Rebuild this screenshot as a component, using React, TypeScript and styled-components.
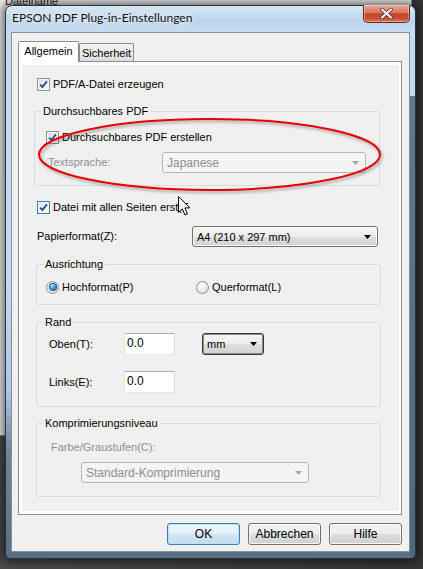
import React from "react";
import styled, { createGlobalStyle } from "styled-components";

const GlobalStyle = createGlobalStyle`
  html, body {
    margin: 0;
    padding: 0;
    background: #3b3b3b;
  }
  body {
    font-family: "Liberation Sans", Arial, sans-serif;
    font-size: 11px;
    color: #000;
  }
`;

const Desktop = styled.div`
  position: relative;
  width: 423px;
  height: 569px;
  overflow: hidden;
  background: linear-gradient(to right, #4a4a4a 0%, #3d3d3d 60%, #353535 100%);
`;

// window lying behind the dialog, only its edges are visible
const BackWindow = styled.div`
  position: absolute;
  left: -30px;
  top: -6px;
  width: 440px;
  height: 440px;
  background: #ececec;
  border: 1px solid #8a8a8a;
`;

const BackHeader = styled.div`
  padding-left: 34px;
  line-height: 12px;
  font-size: 11px;
  color: #222;
`;

const Window = styled.div`
  position: absolute;
  left: 5px;
  top: 5px;
  width: 411px;
  box-sizing: border-box;
  border: 1px solid #26323e;
  border-radius: 7px 7px 5px 5px;
  padding: 0 5px 6px;
  background:
    linear-gradient(#63778c, #52657a) right 0 top 90px / 5px calc(100% - 90px) no-repeat,
    linear-gradient(
      to bottom,
      #d9e8f6 0px,
      #bcd4ec 14px,
      #c6dbf0 26px,
      #c3d9ef 50%,
      #aec8e2 70%,
      #71869b 80%,
      #5a6e83 100%
    );
  box-shadow: 0 0 10px 3px rgba(0, 0, 0, 0.55);
`;

const TitleBar = styled.div`
  height: 26px;
  display: flex;
  align-items: flex-start;
  justify-content: space-between;
`;

const Title = styled.div`
  padding: 4px 0 0 1px;
  font-family: Lato, "Noto Sans", sans-serif;
  font-size: 12px;
  line-height: 16px;
  color: #111;
  text-shadow: 0 0 6px rgba(255, 255, 255, 0.95), 0 0 10px rgba(255, 255, 255, 0.8);
`;

const CloseButton = styled.div`
  width: 47px;
  height: 18px;
  margin-top: -1px;
  box-sizing: border-box;
  border: 1px solid #5b2b22;
  border-top: none;
  border-radius: 0 0 5px 5px;
  background: linear-gradient(
    #e9a896 0%,
    #d9765f 45%,
    #c3442b 52%,
    #c94f36 80%,
    #e07859 100%
  );
  box-shadow: inset 0 0 0 1px rgba(255, 255, 255, 0.35);
  display: flex;
  align-items: center;
  justify-content: center;
`;

const Client = styled.div`
  border: 1px solid #7d91a5;
  background: #f0f0f0;
  padding: 8px 7px 6px 6px;
`;

const TabStrip = styled.div`
  display: flex;
  align-items: flex-end;
  height: 21px;
  margin-bottom: -1px;
  position: relative;
  z-index: 1;
`;

const Tab = styled.div<{ $active?: boolean; $w: number }>`
  box-sizing: border-box;
  width: ${(p) => p.$w}px;
  height: ${(p) => (p.$active ? 21 : 18)}px;
  margin-bottom: ${(p) => (p.$active ? 0 : 1)}px;
  border: 1px solid #898c95;
  border-bottom: none;
  border-radius: 2px 2px 0 0;
  background: ${(p) =>
    p.$active ? "#fff" : "linear-gradient(#f4f4f4 0%, #e9e9e9 50%, #dcdcdc 100%)"};
  display: flex;
  align-items: center;
  justify-content: center;
  padding-bottom: ${(p) => (p.$active ? 2 : 0)}px;
  font-size: 11px;
`;

const TabPanel = styled.div`
  border: 1px solid #898c95;
  background: #fff;
  padding: 3px 2px 3px 3px;
`;

const PanelContent = styled.div`
  background: #f0f0f0;
  padding: 12px 18px 14px 14px;
  display: flex;
  flex-direction: column;
`;

const CheckRow = styled.div<{ $top: number; $left: number }>`
  display: flex;
  align-items: center;
  gap: 3px;
  height: 14px;
  margin-top: ${(p) => p.$top}px;
  margin-left: ${(p) => p.$left}px;
  white-space: nowrap;
`;

const CheckBox = styled.span<{ $hot?: boolean }>`
  flex: none;
  width: 13px;
  height: 13px;
  box-sizing: border-box;
  border: 1px solid ${(p) => (p.$hot ? "#3c7fb1" : "#8e8f8f")};
  background: ${(p) =>
    p.$hot
      ? "linear-gradient(135deg, #c6e6f8 0%, #eef7fd 60%, #ffffff 100%)"
      : "linear-gradient(135deg, #d6d6d6 0%, #f0f0f0 60%, #ffffff 100%)"};
  box-shadow: inset 0 0 0 1px #f7f7f7;
  display: flex;
  align-items: center;
  justify-content: center;
`;

const Group = styled.fieldset<{ $top: number; $left?: number; $right?: number }>`
  margin: ${(p) => p.$top}px ${(p) => p.$right ?? 0}px 0 ${(p) => p.$left ?? 0}px;
  padding: 0;
  min-inline-size: 0;
  border: 1px solid #d5dce2;
  border-radius: 3px;
`;

const Legend = styled.legend`
  margin-left: 6px;
  padding: 0 2px;
  font-size: 11px;
  line-height: 13px;
`;

const GroupBody = styled.div<{ $pad: string }>`
  padding: ${(p) => p.$pad};
  display: flex;
  flex-direction: column;
`;

const FieldRow = styled.div<{ $top?: number }>`
  display: flex;
  align-items: center;
  margin-top: ${(p) => p.$top ?? 0}px;
`;

const Label = styled.span<{ $w?: number; $dim?: boolean; $left?: number }>`
  flex: none;
  width: ${(p) => (p.$w ? `${p.$w}px` : "auto")};
  margin-left: ${(p) => p.$left ?? 0}px;
  color: ${(p) => (p.$dim ? "#8f8f8f" : "#000")};
  line-height: 13px;
  white-space: nowrap;
`;

type ComboKind = "normal" | "pressed" | "disabled";

const ComboBox = styled.div<{ $kind: ComboKind; $w: number; $h: number; $left?: number; $right?: number; $push?: boolean }>`
  flex: none;
  box-sizing: border-box;
  width: ${(p) => p.$w}px;
  height: ${(p) => p.$h}px;
  margin-left: ${(p) => (p.$push ? "auto" : `${p.$left ?? 0}px`)};
  margin-right: ${(p) => p.$right ?? 0}px;
  border: 1px solid
    ${(p) => (p.$kind === "disabled" ? "#b4b8bb" : p.$kind === "pressed" ? "#3a3a3a" : "#707070")};
  border-radius: 3px;
  background: ${(p) =>
    p.$kind === "disabled"
      ? "#f4f4f4"
      : "linear-gradient(#f6f6f6 0%, #ececec 50%, #dedede 51%, #d2d2d2 100%)"};
  box-shadow: ${(p) =>
    p.$kind === "pressed"
      ? "inset 0 0 0 1px #8a8a8a"
      : p.$kind === "normal"
      ? "inset 0 0 0 1px #fcfcfc"
      : "none"};
  color: ${(p) => (p.$kind === "disabled" ? "#8d8d8d" : "#000")};
  display: flex;
  align-items: center;
  justify-content: space-between;
  padding: 0 6px 0 4px;
  font-size: ${(p) => (p.$kind === "disabled" ? 12 : 11)}px;
  white-space: nowrap;
`;

const TextBox = styled.div`
  flex: none;
  box-sizing: border-box;
  width: 51px;
  height: 22px;
  border: 1px solid;
  border-color: #abadb3 #dbdfe6 #e3e9ef #e2e3ea;
  background: #fff;
  padding: 3px 0 0 2px;
  line-height: 13px;
  font-size: 12px;
`;

const RadioRow = styled.div`
  display: flex;
  align-items: center;
  height: 14px;
`;

const RadioItem = styled.div<{ $w?: number }>`
  display: flex;
  align-items: center;
  gap: 3px;
  width: ${(p) => (p.$w ? `${p.$w}px` : "auto")};
`;

const RadioDot = styled.span<{ $on?: boolean }>`
  flex: none;
  width: 13px;
  height: 13px;
  box-sizing: border-box;
  border-radius: 50%;
  border: 1px solid #8e8f8f;
  background: radial-gradient(circle at 40% 35%, #ffffff 0%, #ececec 50%, #cfcfcf 100%);
  display: flex;
  align-items: center;
  justify-content: center;
  &::after {
    content: "";
    display: ${(p) => (p.$on ? "block" : "none")};
    width: 6px;
    height: 6px;
    border-radius: 50%;
    background: radial-gradient(circle at 35% 30%, #b8e6ff 0%, #2f8ad8 55%, #0c4c8e 100%);
    box-shadow: 0 0 0 1px #1a4f80;
  }
`;

const ButtonRow = styled.div`
  display: flex;
  justify-content: flex-end;
  gap: 8px;
  margin-top: 8px;
`;

const DialogButton = styled.button<{ $default?: boolean }>`
  box-sizing: border-box;
  width: 73px;
  height: 22px;
  padding: 0;
  font-family: "Liberation Sans", Arial, sans-serif;
  font-size: 12px;
  color: #000;
  border: 1px solid ${(p) => (p.$default ? "#3c7fb1" : "#707070")};
  border-radius: 3px;
  background: ${(p) =>
    p.$default
      ? "linear-gradient(#eef6fb 0%, #e1eff8 50%, #cfe6f4 51%, #c3ddee 100%)"
      : "linear-gradient(#f3f3f3 0%, #ececec 50%, #dddddd 51%, #d0d0d0 100%)"};
  box-shadow: inset 0 0 0 1px ${(p) => (p.$default ? "#b8e2f8" : "#fbfbfb")};
`;

const Annotation = styled.svg`
  position: absolute;
  left: 30px;
  top: 110px;
  overflow: visible;
  pointer-events: none;
`;

const Cursor = styled.svg`
  position: absolute;
  left: 178px;
  top: 196px;
  overflow: visible;
`;

const Check = ({ hot }: { hot?: boolean }) => (
  <CheckBox $hot={hot}>
    <svg width="9" height="9" viewBox="0 0 9 9">
      <path d="M1.2 4.6 L3.4 7 L7.9 1.3" fill="none" stroke="#2d4f8f" strokeWidth="1.9" />
    </svg>
  </CheckBox>
);

const Arrow = ({ dim }: { dim?: boolean }) => (
  <svg width="7" height="4" viewBox="0 0 7 4">
    <polygon points="0,0 7,0 3.5,4" fill={dim ? "#a8a8a8" : "#000"} />
  </svg>
);

export default function App() {
  return (
    <>
      <GlobalStyle />
      <Desktop>
        <BackWindow>
          <BackHeader>Dateiname</BackHeader>
        </BackWindow>

        <Window>
          <TitleBar>
            <Title>EPSON PDF Plug-in-Einstellungen</Title>
            <CloseButton>
              <svg width="13" height="11" viewBox="0 0 13 11">
                <path d="M2 1.5 L11 9.5 M11 1.5 L2 9.5" stroke="#3a3a3a" strokeWidth="3.6" strokeLinecap="round" />
                <path d="M2 1.5 L11 9.5 M11 1.5 L2 9.5" stroke="#ffffff" strokeWidth="2" strokeLinecap="round" />
              </svg>
            </CloseButton>
          </TitleBar>

          <Client>
            <TabStrip>
              <Tab $active $w={61}>Allgemein</Tab>
              <Tab $w={55}>Sicherheit</Tab>
            </TabStrip>
            <TabPanel>
              <PanelContent>
                <CheckRow $top={0} $left={1}>
                  <Check />
                  PDF/A-Datei erzeugen
                </CheckRow>

                <Group $top={14} $left={-2} $right={1}>
                  <Legend>Durchsuchbares PDF</Legend>
                  <GroupBody $pad="12px 13px 12px 11px">
                    <CheckRow $top={0} $left={0}>
                      <Check />
                      Durchsuchbares PDF erstellen
                    </CheckRow>
                    <FieldRow $top={8}>
                      <Label $w={114} $left={2} $dim>
                        Textsprache:
                      </Label>
                      <ComboBox $kind="disabled" $w={204} $h={21}>
                        Japanese
                        <Arrow dim />
                      </ComboBox>
                    </FieldRow>
                  </GroupBody>
                </Group>

                <CheckRow $top={14} $left={1}>
                  <Check hot />
                  Datei mit allen Seiten erst(F
                </CheckRow>

                <FieldRow $top={12}>
                  <Label $left={1}>Papierformat(Z):</Label>
                  <ComboBox $kind="normal" $w={186} $h={21} $push $right={3}>
                    A4 (210 x 297 mm)
                    <Arrow />
                  </ComboBox>
                </FieldRow>

                <Group $top={11}>
                  <Legend>Ausrichtung</Legend>
                  <GroupBody $pad="9px 0 10px 9px">
                    <RadioRow>
                      <RadioItem $w={150}>
                        <RadioDot $on />
                        Hochformat(P)
                      </RadioItem>
                      <RadioItem>
                        <RadioDot />
                        Querformat(L)
                      </RadioItem>
                    </RadioRow>
                  </GroupBody>
                </Group>

                <Group $top={11}>
                  <Legend>Rand</Legend>
                  <GroupBody $pad="4px 0 13px 12px">
                    <FieldRow>
                      <Label $w={75}>Oben(T):</Label>
                      <TextBox>0.0</TextBox>
                      <ComboBox $kind="pressed" $w={62} $h={22} $left={27}>
                        mm
                        <Arrow />
                      </ComboBox>
                    </FieldRow>
                    <FieldRow $top={16}>
                      <Label $w={75}>Links(E):</Label>
                      <TextBox>0.0</TextBox>
                    </FieldRow>
                  </GroupBody>
                </Group>

                <Group $top={10}>
                  <Legend>Komprimierungsniveau</Legend>
                  <GroupBody $pad="11px 0 13px 14px">
                    <FieldRow>
                      <Label $dim>Farbe/Graustufen(C):</Label>
                    </FieldRow>
                    <FieldRow $top={8}>
                      <ComboBox $kind="disabled" $w={228} $h={21} $left={30}>
                        Standard-Komprimierung
                        <Arrow dim />
                      </ComboBox>
                    </FieldRow>
                  </GroupBody>
                </Group>
              </PanelContent>
            </TabPanel>

            <ButtonRow>
              <DialogButton $default>OK</DialogButton>
              <DialogButton>Abbrechen</DialogButton>
              <DialogButton>Hilfe</DialogButton>
            </ButtonRow>
          </Client>
        </Window>

        <Annotation width="360" height="90">
          <defs>
            <filter id="soft" x="-10%" y="-30%" width="120%" height="160%">
              <feDropShadow dx="1.5" dy="2" stdDeviation="1.5" floodColor="#000" floodOpacity="0.35" />
            </filter>
          </defs>
          <ellipse cx="179.5" cy="44.5" rx="170.5" ry="35.5" fill="none" stroke="#e60000" strokeWidth="2" filter="url(#soft)" />
        </Annotation>

        <Cursor width="13" height="20" viewBox="0 0 13 20">
          <path
            d="M0.5 0.5 L0.5 16.5 L4.3 12.8 L7 19 L9.4 18 L6.8 11.9 L11.8 11.9 Z"
            fill="#fff"
            stroke="#000"
            strokeWidth="1"
            strokeLinejoin="miter"
          />
        </Cursor>
      </Desktop>
    </>
  );
}
